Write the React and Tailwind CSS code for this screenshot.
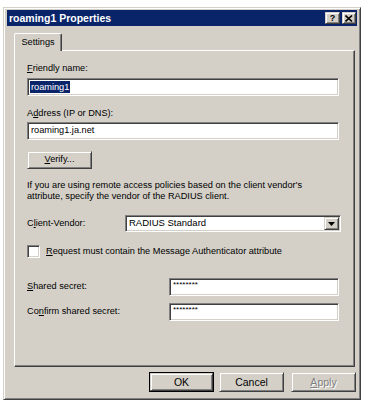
import React from "react";

const sunken =
  "bg-white border border-t-[#808080] border-l-[#808080] border-b-white border-r-white shadow-[inset_1px_1px_0_#404040,inset_-1px_-1px_0_#d4d0c8]";
const raised =
  "bg-[#d4d0c8] border border-t-[#d4d0c8] border-l-[#d4d0c8] border-b-[#404040] border-r-[#404040] shadow-[inset_1px_1px_0_#ffffff,inset_-1px_-1px_0_#808080]";

function U({ children }) {
  return <span className="underline underline-offset-[1px]">{children}</span>;
}

function TitleBar() {
  return (
    <div className="h-[16px] bg-[#0a246a] flex items-center justify-between pl-[2px] pr-[1px]">
      <span className="text-white font-bold text-[10.5px] leading-none">roaming1 Properties</span>
      <div className="flex gap-[2px]">
        <div className={`${raised} w-[15px] h-[12px] flex items-center justify-center`}>
          <span className="text-[9px] font-bold leading-none text-black">?</span>
        </div>
        <div className={`${raised} w-[14px] h-[12px] flex items-center justify-center`}>
          <svg width="8" height="7" viewBox="0 0 8 7">
            <path d="M0.5 0.5 L7 6.5 M7 0.5 L0.5 6.5" stroke="#000" strokeWidth="1.6" />
          </svg>
        </div>
      </div>
    </div>
  );
}

function Button({ children, className = "", isDefault = false, disabled = false }) {
  return (
    <div
      className={`h-[20px] w-[65px] flex items-center justify-center ${
        isDefault ? "border border-black" : ""
      } ${className}`}
    >
      <div className={`${raised} w-full h-full flex items-center justify-center`}>
        <span
          className={`text-[10.5px] leading-none ${
            disabled ? "text-[#808080] [text-shadow:1px_1px_0_#ffffff]" : "text-black"
          }`}
        >
          {children}
        </span>
      </div>
    </div>
  );
}

export default function App() {
  return (
    <div className="min-h-[409px] w-[368px] bg-white pt-[7px] pl-[3px] font-['Liberation_Sans',Arial,sans-serif] text-[9.2px] text-black">
      <div className="w-[358px] h-[393px] bg-[#d4d0c8] border border-t-[#d4d0c8] border-l-[#d4d0c8] border-b-[#404040] border-r-[#404040] shadow-[inset_1px_1px_0_#ffffff,inset_-1px_-1px_0_#808080] px-[3px] pt-[2px] flex flex-col">
        <TitleBar />

        {/* tab strip */}
        <div className="mt-[7px] ml-[7px] flex">
          <div className="relative z-10 -mb-[1px] h-[18px] w-[48px] bg-[#d4d0c8] border-t border-l border-r border-t-white border-l-white border-r-[#404040] rounded-t-[2px] shadow-[inset_-1px_0_0_#808080] flex items-center justify-center">
            <span className="text-[9.2px] leading-none">Settings</span>
          </div>
        </div>

        {/* tab page */}
        <div className="ml-[7px] w-[341px] h-[317px] border border-t-white border-l-white border-b-[#404040] border-r-[#404040] shadow-[inset_-1px_-1px_0_#808080] pl-[12px] flex flex-col">
          <div className="mt-[11px] h-[12px] leading-[12px]">
            <U>F</U>riendly name:
          </div>
          <div className={`${sunken} mt-[4px] h-[18px] w-[312px] flex items-center pl-[2px]`}>
            <span className="bg-[#0a246a] text-white leading-[12px] px-[1px]">roaming1</span>
          </div>

          <div className="mt-[11px] h-[12px] leading-[12px]">
            A<U>d</U>dress (IP or DNS):
          </div>
          <div className={`${sunken} mt-[3px] h-[18px] w-[312px] flex items-center pl-[3px]`}>
            roaming1.ja.net
          </div>

          <div className={`${raised} mt-[11px] h-[18px] w-[65px] flex items-center justify-center`}>
            <span>
              <U>V</U>erify...
            </span>
          </div>

          <div className="mt-[11px] leading-[11px] whitespace-nowrap">
            If you are using remote access policies based on the client vendor's
            <br />
            attribute, specify the vendor of the RADIUS client.
          </div>

          <div className="mt-[13px] flex items-center h-[17px]">
            <span className="w-[98px]">
              C<U>l</U>ient-Vendor:
            </span>
            <div className={`${sunken} h-[17px] w-[216px] flex items-center justify-between pl-[3px] pr-[1px]`}>
              <span className="text-[9.5px]">RADIUS Standard</span>
              <div className={`${raised} w-[15px] h-[13px] flex items-center justify-center`}>
                <svg width="7" height="4" viewBox="0 0 7 4">
                  <path d="M0 0 H7 L3.5 4 Z" fill="#000" />
                </svg>
              </div>
            </div>
          </div>

          <div className="mt-[13px] flex items-center h-[13px]">
            <div className={`${sunken} w-[13px] h-[13px]`} />
            <span className="ml-[6px]">
              <U>R</U>equest must contain the Message Authenticator attribute
            </span>
          </div>

          <div className="mt-[20px] flex items-center h-[18px]">
            <span className="w-[142px]">
              <U>S</U>hared secret:
            </span>
            <div className={`${sunken} h-[18px] w-[170px] pl-[3px] leading-[12px] text-[8px]`}>
              ********
            </div>
          </div>

          <div className="mt-[7px] flex items-center h-[18px]">
            <span className="w-[142px]">
              Co<U>n</U>firm shared secret:
            </span>
            <div className={`${sunken} h-[18px] w-[170px] pl-[3px] leading-[12px] text-[8px]`}>
              ********
            </div>
          </div>
        </div>

        {/* dialog buttons */}
        <div className="mt-[5px] flex justify-end pr-[1px]">
          <Button isDefault>OK</Button>
          <Button className="ml-[5px]">Cancel</Button>
          <Button className="ml-[7px]" disabled>
            <U>A</U>pply
          </Button>
        </div>
      </div>
    </div>
  );
}
